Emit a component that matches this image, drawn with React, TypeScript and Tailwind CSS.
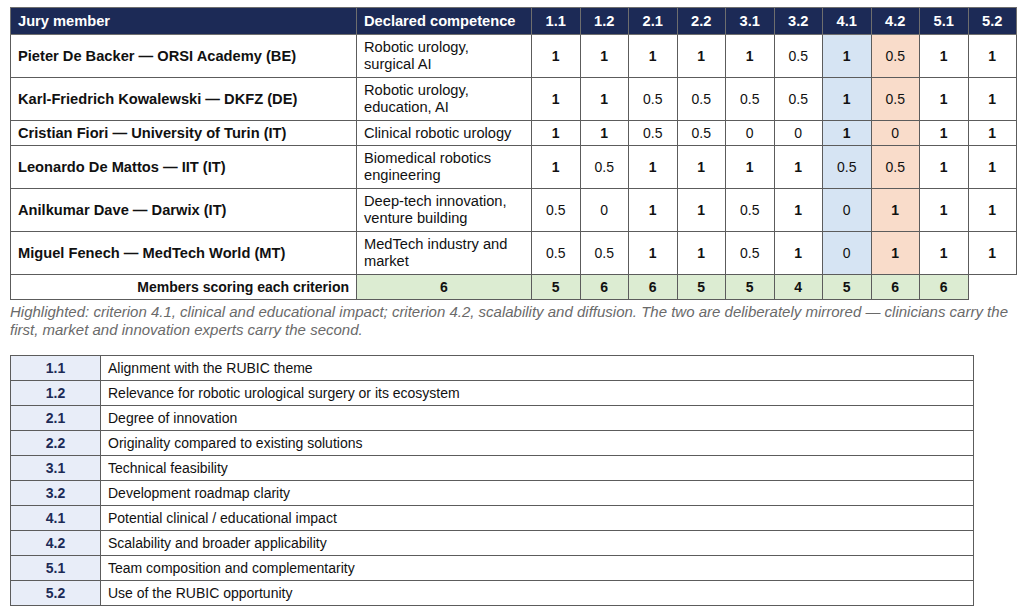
import React from 'react';

const criteria = ['1.1', '1.2', '2.1', '2.2', '3.1', '3.2', '4.1', '4.2', '5.1', '5.2'];

type Member = { name: string; competence: React.ReactNode; scores: number[] };

const members: Member[] = [
  { name: 'Pieter De Backer — ORSI Academy (BE)', competence: <>Robotic urology,<br />surgical AI</>, scores: [1, 1, 1, 1, 1, 0.5, 1, 0.5, 1, 1] },
  { name: 'Karl-Friedrich Kowalewski — DKFZ (DE)', competence: <>Robotic urology,<br />education, AI</>, scores: [1, 1, 0.5, 0.5, 0.5, 0.5, 1, 0.5, 1, 1] },
  { name: 'Cristian Fiori — University of Turin (IT)', competence: 'Clinical robotic urology', scores: [1, 1, 0.5, 0.5, 0, 0, 1, 0, 1, 1] },
  { name: 'Leonardo De Mattos — IIT (IT)', competence: <>Biomedical robotics<br />engineering</>, scores: [1, 0.5, 1, 1, 1, 1, 0.5, 0.5, 1, 1] },
  { name: 'Anilkumar Dave — Darwix (IT)', competence: <>Deep-tech innovation,<br />venture building</>, scores: [0.5, 0, 1, 1, 0.5, 1, 0, 1, 1, 1] },
  { name: 'Miguel Fenech — MedTech World (MT)', competence: <>MedTech industry and<br />market</>, scores: [0.5, 0.5, 1, 1, 0.5, 1, 0, 1, 1, 1] },
];

const totals = [5, 6, 6, 5, 5, 4, 5, 6, 6];

const definitions: [string, string][] = [
  ['1.1', 'Alignment with the RUBIC theme'],
  ['1.2', 'Relevance for robotic urological surgery or its ecosystem'],
  ['2.1', 'Degree of innovation'],
  ['2.2', 'Originality compared to existing solutions'],
  ['3.1', 'Technical feasibility'],
  ['3.2', 'Development roadmap clarity'],
  ['4.1', 'Potential clinical / educational impact'],
  ['4.2', 'Scalability and broader applicability'],
  ['5.1', 'Team composition and complementarity'],
  ['5.2', 'Use of the RUBIC opportunity'],
];

const cellBg = (i: number) => (i === 6 ? 'bg-[#d6e4f3]' : i === 7 ? 'bg-[#f9dcca]' : 'bg-white');

export default function App() {
  return (
    <div className="min-h-screen bg-white pt-[7px] px-[10px] text-[14px] leading-[17px] text-[#111]" style={{ fontFamily: '"Liberation Sans", Arial, sans-serif' }}>
      <table className="table-fixed border-collapse w-[1006px]">
        <colgroup>
          <col className="w-[346px]" />
          <col className="w-[175px]" />
          {criteria.map((c) => (
            <col key={c} className="w-[48.5px]" />
          ))}
        </colgroup>
        <thead>
          <tr className="h-[27px] bg-[#1c2a56] text-white font-bold text-[14.67px]">
            <th className="border border-[#6e6e6e] px-[7px] text-left">Jury member</th>
            <th className="border border-[#6e6e6e] px-[7px] text-left">Declared competence</th>
            {criteria.map((c) => (
              <th key={c} className="border border-[#6e6e6e] text-center">{c}</th>
            ))}
          </tr>
        </thead>
        <tbody>
          {members.map((m) => {
            const twoLine = typeof m.competence !== 'string';
            return (
              <tr key={m.name} className={twoLine ? 'h-[43px]' : 'h-[25px]'}>
                <td className="border border-[#5c5c5c] px-[7px] font-bold text-[14.67px]">{m.name}</td>
                <td className="border border-[#5c5c5c] px-[7px] text-[14.67px]">{m.competence}</td>
                {m.scores.map((s, i) => (
                  <td key={i} className={`border border-[#5c5c5c] text-center ${cellBg(i)} ${s === 1 ? 'font-bold' : ''}`}>
                    {s}
                  </td>
                ))}
              </tr>
            );
          })}
          <tr className="h-[25px] font-bold">
            <td className="border border-[#5c5c5c] px-[7px] text-right">Members scoring each criterion</td>
            <td className="border border-[#5c5c5c] bg-[#dcecd2] text-center">6</td>
            {totals.map((t, i) => (
              <td key={i} className="border border-[#5c5c5c] bg-[#dcecd2] text-center">{t}</td>
            ))}
          </tr>
        </tbody>
      </table>
      <p className="mt-[3px] italic text-[#6a6a6a] text-[15px] leading-[18px]">
        Highlighted: criterion 4.1, clinical and educational impact; criterion 4.2, scalability and diffusion. The two are deliberately mirrored — clinicians carry the first, market and innovation experts carry the second.
      </p>
      <table className="mt-[16px] table-fixed border-collapse w-[964px]">
        <colgroup>
          <col className="w-[90px]" />
          <col />
        </colgroup>
        <tbody>
          {definitions.map(([code, label]) => (
            <tr key={code} className="h-[25px]">
              <td className="border border-[#5c5c5c] bg-[#e8edf8] text-center font-bold text-[#1c2a56]">{code}</td>
              <td className="border border-[#5c5c5c] px-[7px]">{label}</td>
            </tr>
          ))}
        </tbody>
      </table>
    </div>
  );
}
